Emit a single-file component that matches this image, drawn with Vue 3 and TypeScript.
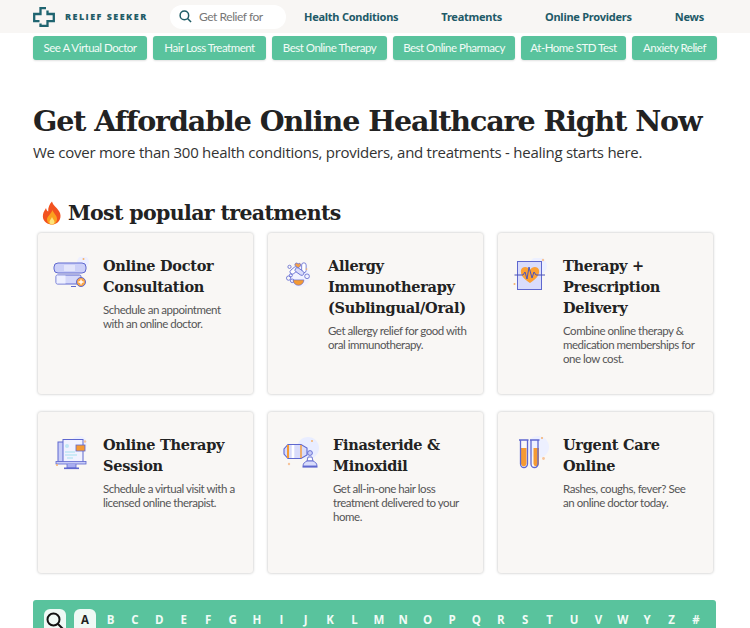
<script setup lang="ts">
const navItems: string[] = ['Health Conditions', 'Treatments', 'Online Providers', 'News']
const pills: { label: string; width: number }[] = [
  { label: 'See A Virtual Doctor', width: 114 },
  { label: 'Hair Loss Treatment', width: 113 },
  { label: 'Best Online Therapy', width: 115 },
  { label: 'Best Online Pharmacy', width: 122 },
  { label: 'At-Home STD Test', width: 105 },
  { label: 'Anxiety Relief', width: 85 },
]
const cards: { icon: string; title: string; desc: string; narrow?: boolean }[] = [
  { icon: 'doctor', title: 'Online Doctor Consultation', desc: 'Schedule an appointment with an online doctor.' },
  { icon: 'allergy', title: 'Allergy Immunotherapy (Sublingual/Oral)', desc: 'Get allergy relief for good with oral immunotherapy.', narrow: true },
  { icon: 'heart', title: 'Therapy + Prescription Delivery', desc: 'Combine online therapy & medication memberships for one low cost.' },
  { icon: 'screen', title: 'Online Therapy Session', desc: 'Schedule a virtual visit with a licensed online therapist.' },
  { icon: 'hair', title: 'Finasteride & Minoxidil', desc: 'Get all-in-one hair loss treatment delivered to your home.' },
  { icon: 'tubes', title: 'Urgent Care Online', desc: 'Rashes, coughs, fever? See an online doctor today.' },
]
const letters: string[] = 'BCDEFGHIJKLMNOPQRSTUVWYZ#'.split('')
</script>

<template>
  <div class="page">
    <header class="header">
      <div class="brand">
        <svg class="logo" viewBox="0 0 22 20" width="22" height="20" fill="none" stroke="#1f6470" stroke-width="2.3">
          <path d="M13 1.2H7.5V7H1.2V14.2H6.5" />
          <path d="M14.5 3.5V7H20.8V14.2H14.5V18.8H7.5V16.5" />
        </svg>
        <span class="brand-name">RELIEF SEEKER</span>
      </div>
      <div class="search">
        <svg viewBox="0 0 14 14" width="13" height="13" fill="none" stroke="#1f5c66" stroke-width="1.6">
          <circle cx="5.8" cy="5.8" r="4.6" />
          <path d="M9.2 9.2L13 13" />
        </svg>
        <span class="search-text">Get Relief for</span>
      </div>
      <nav class="nav">
        <a v-for="item in navItems" :key="item" class="nav-link">{{ item }}</a>
      </nav>
    </header>

    <div class="pills">
      <span v-for="p in pills" :key="p.label" class="pill" :style="{ width: p.width + 'px' }">{{ p.label }}</span>
    </div>

    <section class="hero">
      <h1>Get Affordable Online Healthcare Right Now</h1>
      <p>We cover more than 300 health conditions, providers, and treatments - healing starts here.</p>
    </section>

    <h2 class="popular">
      <svg viewBox="0 0 22 24" width="22" height="24">
        <path d="M11 0.5C12 5 17 7 19 12C21 18 17 23.5 11 23.5C5 23.5 1 19 2 13.5C2.5 10.5 4 9 5 7C5.5 9 6 10 7.2 10.5C7 6.5 8.5 3 11 0.5Z" fill="#f2521f" />
        <path d="M11.5 9C12 12 16 14 16 18C16 21.5 13.5 23.5 11 23.5C8 23.5 6 21.3 6 18.5C6 15.5 10 13 11.5 9Z" fill="#fba01e" />
        <path d="M11 16C11.5 18 13.5 19 13.5 21C13.5 22.5 12.3 23.5 11 23.5C9.6 23.5 8.5 22.5 8.5 21C8.5 19.2 10.5 18 11 16Z" fill="#fde27a" />
      </svg>
      <span>Most popular treatments</span>
    </h2>

    <div class="grid">
      <article v-for="c in cards" :key="c.title" class="card">
        <div class="icon" :class="[`icon-${c.icon}`, { narrow: c.narrow }]">
          <svg v-if="c.icon === 'doctor'" viewBox="0 0 36 30" width="36" height="30">
            <circle cx="30" cy="5" r="6" fill="#eef0ff" />
            <circle cx="30.5" cy="2" r="1" fill="#f6b26b" />
            <rect x="1" y="6" width="32" height="10" rx="4" fill="#ccd0f8" stroke="#5f68cf" stroke-width="1" />
            <rect x="11" y="8" width="11" height="6" fill="#e3e5fb" />
            <rect x="3" y="18" width="25" height="9" rx="1.5" fill="#d5d8fa" stroke="#5f68cf" stroke-width="1" />
            <rect x="3.5" y="18.5" width="9" height="8" fill="#eef0ff" />
            <rect x="18" y="29" width="5" height="1.5" fill="#5f68cf" />
            <circle cx="28" cy="25" r="4.5" fill="#fba544" stroke="#5f68cf" stroke-width="1" />
            <path d="M25.5 25H30.5M28 22.5V27.5" stroke="#fff" stroke-width="1.4" />
          </svg>
          <svg v-else-if="c.icon === 'allergy'" viewBox="0 0 30 30" width="27" height="27" fill="none">
            <circle cx="16" cy="17" r="12" fill="#f1f2ff" />
            <path d="M11 3.5C12 1.5 14 2 14.5 3.5C15.5 2 17.5 2.5 17.5 4.5C17 6.5 15 7.5 14.5 8C13 7 11 6 11 3.5Z" fill="#f4a04a" stroke="#5f68cf" stroke-width=".8" />
            <rect x="18.5" y="2" width="5" height="11" rx="2.5" fill="#fff" stroke="#5f68cf" stroke-width=".9" />
            <rect x="5" y="8" width="10" height="5" rx="2.5" transform="rotate(-40 10 10.5)" fill="#fff" stroke="#5f68cf" stroke-width=".9" />
            <rect x="11" y="9" width="11" height="5" rx="2.5" transform="rotate(35 16 11)" fill="#d9dcfb" stroke="#5f68cf" stroke-width=".9" />
            <circle cx="5" cy="6.5" r="1.8" stroke="#5f68cf" stroke-width=".9" />
            <circle cx="4" cy="19" r="2.4" stroke="#5f68cf" stroke-width=".9" />
            <circle cx="8" cy="22" r="2" stroke="#5f68cf" stroke-width=".9" />
            <circle cx="6.5" cy="16" r="1.7" stroke="#5f68cf" stroke-width=".9" />
            <circle cx="24.5" cy="17" r="2.6" stroke="#5f68cf" stroke-width=".9" />
            <path d="M9 21H21A6 6 0 0 1 9 21Z" fill="#f59a33" stroke="#5f68cf" stroke-width=".7" />
            <circle cx="24" cy="9" r=".9" fill="#f6b26b" />
          </svg>
          <svg v-else-if="c.icon === 'heart'" viewBox="0 0 36 36" width="36" height="36" fill="none">
            <circle cx="25" cy="8" r="9" fill="#edf0ff" />
            <circle cx="30" cy="2" r="1.2" fill="#f7c49a" />
            <circle cx="1.5" cy="26" r="1" fill="#f6b26b" />
            <rect x="4.5" y="3.5" width="24" height="28" fill="#d9dcfb" stroke="#5f68cf" stroke-width="1" />
            <path d="M17 25C11 21 7 17 8 12C9 8 15 8 17 12C19 8 25 8 26 12C27 17 23 21 17 25Z" fill="#fba033" />
            <path d="M1.5 17H10L12 14L14 21L16 9L19 20L21 14L23 17H32" stroke="#4b53b8" stroke-width="1" />
          </svg>
          <svg v-else-if="c.icon === 'screen'" viewBox="0 0 32 34" width="32" height="34" fill="none">
            <circle cx="24" cy="8" r="8" fill="#edf0ff" />
            <rect x="3" y="6" width="20" height="20" fill="#c9cdf7" stroke="#5f68cf" stroke-width="1" />
            <rect x="8" y="3.5" width="20" height="23" fill="#f1f2ff" stroke="#5f68cf" stroke-width="1" />
            <circle cx="12" cy="10" r="2" fill="#bfe6f5" />
            <path d="M10 16H20M10 19H22M12 22H18" stroke="#bfe6f5" stroke-width="1.3" />
            <rect x="1" y="25.5" width="30" height="2.5" fill="#c9cdf7" stroke="#5f68cf" stroke-width=".8" />
            <path d="M12 28V32H21V28" fill="#a8adf0" stroke="#5f68cf" stroke-width=".8" />
            <rect x="9" y="31.5" width="15" height="1.6" fill="#5f68cf" />
            <rect x="21" y="9" width="9" height="6" fill="#f59a33" stroke="#5f68cf" stroke-width=".8" />
            <circle cx="30" cy="5.5" r="1.2" fill="#f7c49a" />
            <circle cx="2" cy="29" r="1" fill="#f6b26b" />
          </svg>
          <svg v-else-if="c.icon === 'hair'" viewBox="0 0 36 34" width="36" height="34" fill="none">
            <circle cx="25" cy="12" r="11" fill="#e9edff" />
            <circle cx="29" cy="5" r="1" fill="#f6b26b" />
            <circle cx="6" cy="28" r="1.2" fill="#f7c49a" />
            <path d="M5 8.5H18L24 12V19L18 22.5H5L1 18V13Z" fill="#d9dcfb" stroke="#5f68cf" stroke-width="1.1" />
            <path d="M5 9V22" stroke="#f59a33" stroke-width="2" />
            <path d="M18 9V22" stroke="#f59a33" stroke-width="1.4" />
            <path d="M10 9V22" stroke="#fff" stroke-width="2.6" />
            <circle cx="27" cy="17" r="2.4" fill="#c9cdf7" stroke="#5f68cf" stroke-width=".9" />
            <path d="M25 21H29L30 25H24Z" fill="#fff" stroke="#5f68cf" stroke-width=".9" />
            <path d="M20 30C20 27 22 26 24 25H30C32 26 34 27 34 30Z" fill="#d9dcfb" stroke="#5f68cf" stroke-width=".9" />
            <rect x="19.5" y="30" width="15" height="1.6" fill="#5f68cf" />
          </svg>
          <svg v-else viewBox="0 0 36 34" width="36" height="34" fill="none">
            <circle cx="25" cy="11" r="11" fill="#edf0ff" />
            <circle cx="29" cy="2" r="1" fill="#f6b26b" />
            <circle cx="30.5" cy="22.5" r="1.4" fill="#f7c49a" />
            <path d="M8 12H13.5V28A2.8 2.8 0 0 1 8 28Z M20.5 12H26V28A2.8 2.8 0 0 1 20.5 28Z" fill="#f59a33" />
            <path d="M8 4V28A3.5 3.5 0 0 0 15 28V4M18.5 4V28A3.5 3.5 0 0 0 25.5 28V4" stroke="#5f68cf" stroke-width="1.3" transform="translate(-.5 0)" />
            <path d="M6 4H15.5M17 4H26.5" stroke="#5f68cf" stroke-width="1.5" />
          </svg>
        </div>
        <div class="body">
          <h3>{{ c.title }}</h3>
          <p>{{ c.desc }}</p>
        </div>
      </article>
    </div>

    <div class="alpha">
      <span class="tile search-tile">
        <svg viewBox="0 0 18 18" width="18" height="18" fill="none" stroke="#111" stroke-width="2">
          <circle cx="7.5" cy="7.5" r="6" />
          <path d="M12 12L17 17" />
        </svg>
      </span>
      <span class="tile letter-a">A</span>
      <span v-for="l in letters" :key="l" class="letter">{{ l }}</span>
    </div>
  </div>
</template>

<style scoped>
.page {
  width: 750px;
  height: 628px;
  overflow: hidden;
  background: #fff;
  font-family: "Open Sans", sans-serif;
  color: #222;
}
.header {
  height: 33px;
  background: #f8f6f4;
  display: flex;
  align-items: center;
  padding-left: 33px;
}
.brand {
  display: flex;
  align-items: center;
  gap: 10px;
  width: 137px;
}
.logo { flex: none; margin-top: 1px; }
.brand-name {
  font-size: 9px;
  font-weight: 800;
  letter-spacing: 1.45px;
  color: #1f5c66;
  white-space: nowrap;
}
.search {
  width: 116px;
  height: 24px;
  box-sizing: border-box;
  padding-left: 9px;
  background: #fff;
  border-radius: 12px;
  display: flex;
  align-items: center;
  gap: 7px;
}
.search-text {
  font-family: "Lato", sans-serif;
  font-size: 12px;
  color: #777;
  letter-spacing: -0.45px;
}
.nav {
  display: flex;
  margin-left: 18px;
  gap: 43px;
}
.nav-link {
  font-family: "Noto Sans", sans-serif;
  font-size: 11px;
  font-weight: 700;
  letter-spacing: -0.25px;
  color: #1e5a68;
  white-space: nowrap;
}
.pills {
  display: flex;
  gap: 6px;
  padding: 3px 0 0 33px;
}
.pill {
  height: 24px;
  line-height: 24px;
  text-align: center;
  border-radius: 3px;
  background: #59c39d;
  color: #f2fbf7;
  font-family: "Lato", sans-serif;
  font-size: 11.5px;
  letter-spacing: -0.5px;
  white-space: nowrap;
  box-shadow: 0 1px 2px rgba(0, 0, 0, .12);
}
.hero { padding: 42px 0 0 33px; }
.hero h1 {
  margin: 0;
  font-family: "DejaVu Serif", serif;
  font-size: 28.5px;
  line-height: 38px;
  font-weight: 700;
  letter-spacing: -1.08px;
  color: #222;
  white-space: nowrap;
}
.hero p {
  margin: 2px 0 0;
  font-size: 15px;
  line-height: 20px;
  color: #333;
  letter-spacing: -0.27px;
  white-space: nowrap;
}
.popular {
  margin: 37px 0 0 41px;
  display: flex;
  align-items: center;
  gap: 5px;
  height: 28px;
  font-family: "DejaVu Serif", serif;
  font-size: 20.5px;
  font-weight: 700;
  letter-spacing: -0.64px;
  color: #222;
}
.grid {
  display: grid;
  grid-template-columns: repeat(3, 215px);
  grid-auto-rows: 161px;
  gap: 18px 15px;
  margin: 6px 0 0 38px;
}
.card {
  display: flex;
  background: #f9f7f5;
  border-radius: 3px;
  box-shadow: 0 0 3px rgba(0, 0, 0, .28);
  padding: 22px 14px 0 15px;
  box-sizing: border-box;
}
.icon { width: 50px; flex: none; }
.icon.narrow { width: 45px; }
.icon svg { display: block; }
.icon-doctor { padding-top: 2px; }
.icon-allergy { padding: 6px 0 0 2px; box-sizing: border-box; }
.icon-heart { padding-top: 3px; }
.icon-screen { padding: 2px 0 0 2px; box-sizing: border-box; }
.icon-hair, .icon-tubes { padding-top: 2px; }
.body h3 {
  margin: 0;
  font-family: "DejaVu Serif", serif;
  font-size: 14.5px;
  line-height: 21px;
  letter-spacing: -0.28px;
  font-weight: 700;
  color: #222;
}
.body p {
  margin: 6px 0 0;
  font-family: "Lato", sans-serif;
  font-size: 11.5px;
  line-height: 14px;
  letter-spacing: -0.46px;
  color: #555;
}
.alpha {
  display: flex;
  align-items: flex-start;
  width: 683px;
  height: 40px;
  box-sizing: border-box;
  margin: 27px 0 0 33px;
  padding: 9px 0 0 11px;
  background: #59c39d;
  border-radius: 3px;
}
.tile {
  width: 22px;
  height: 30px;
  border-radius: 6px;
  background: #eff9f5;
  display: flex;
  justify-content: center;
  padding-top: 3px;
  box-sizing: border-box;
  flex: none;
}
.search-tile { margin-right: 8px; }
.letter-a {
  margin-right: 2.4px;
  font-size: 11.5px;
  font-weight: 700;
  line-height: 15px;
  color: #222;
}
.letter {
  width: 24.4px;
  flex: none;
  text-align: center;
  font-size: 11.5px;
  font-weight: 700;
  line-height: 21px;
  color: #f0fbf6;
}
</style>

<style>
html, body { margin: 0; overflow: hidden; }
</style>
